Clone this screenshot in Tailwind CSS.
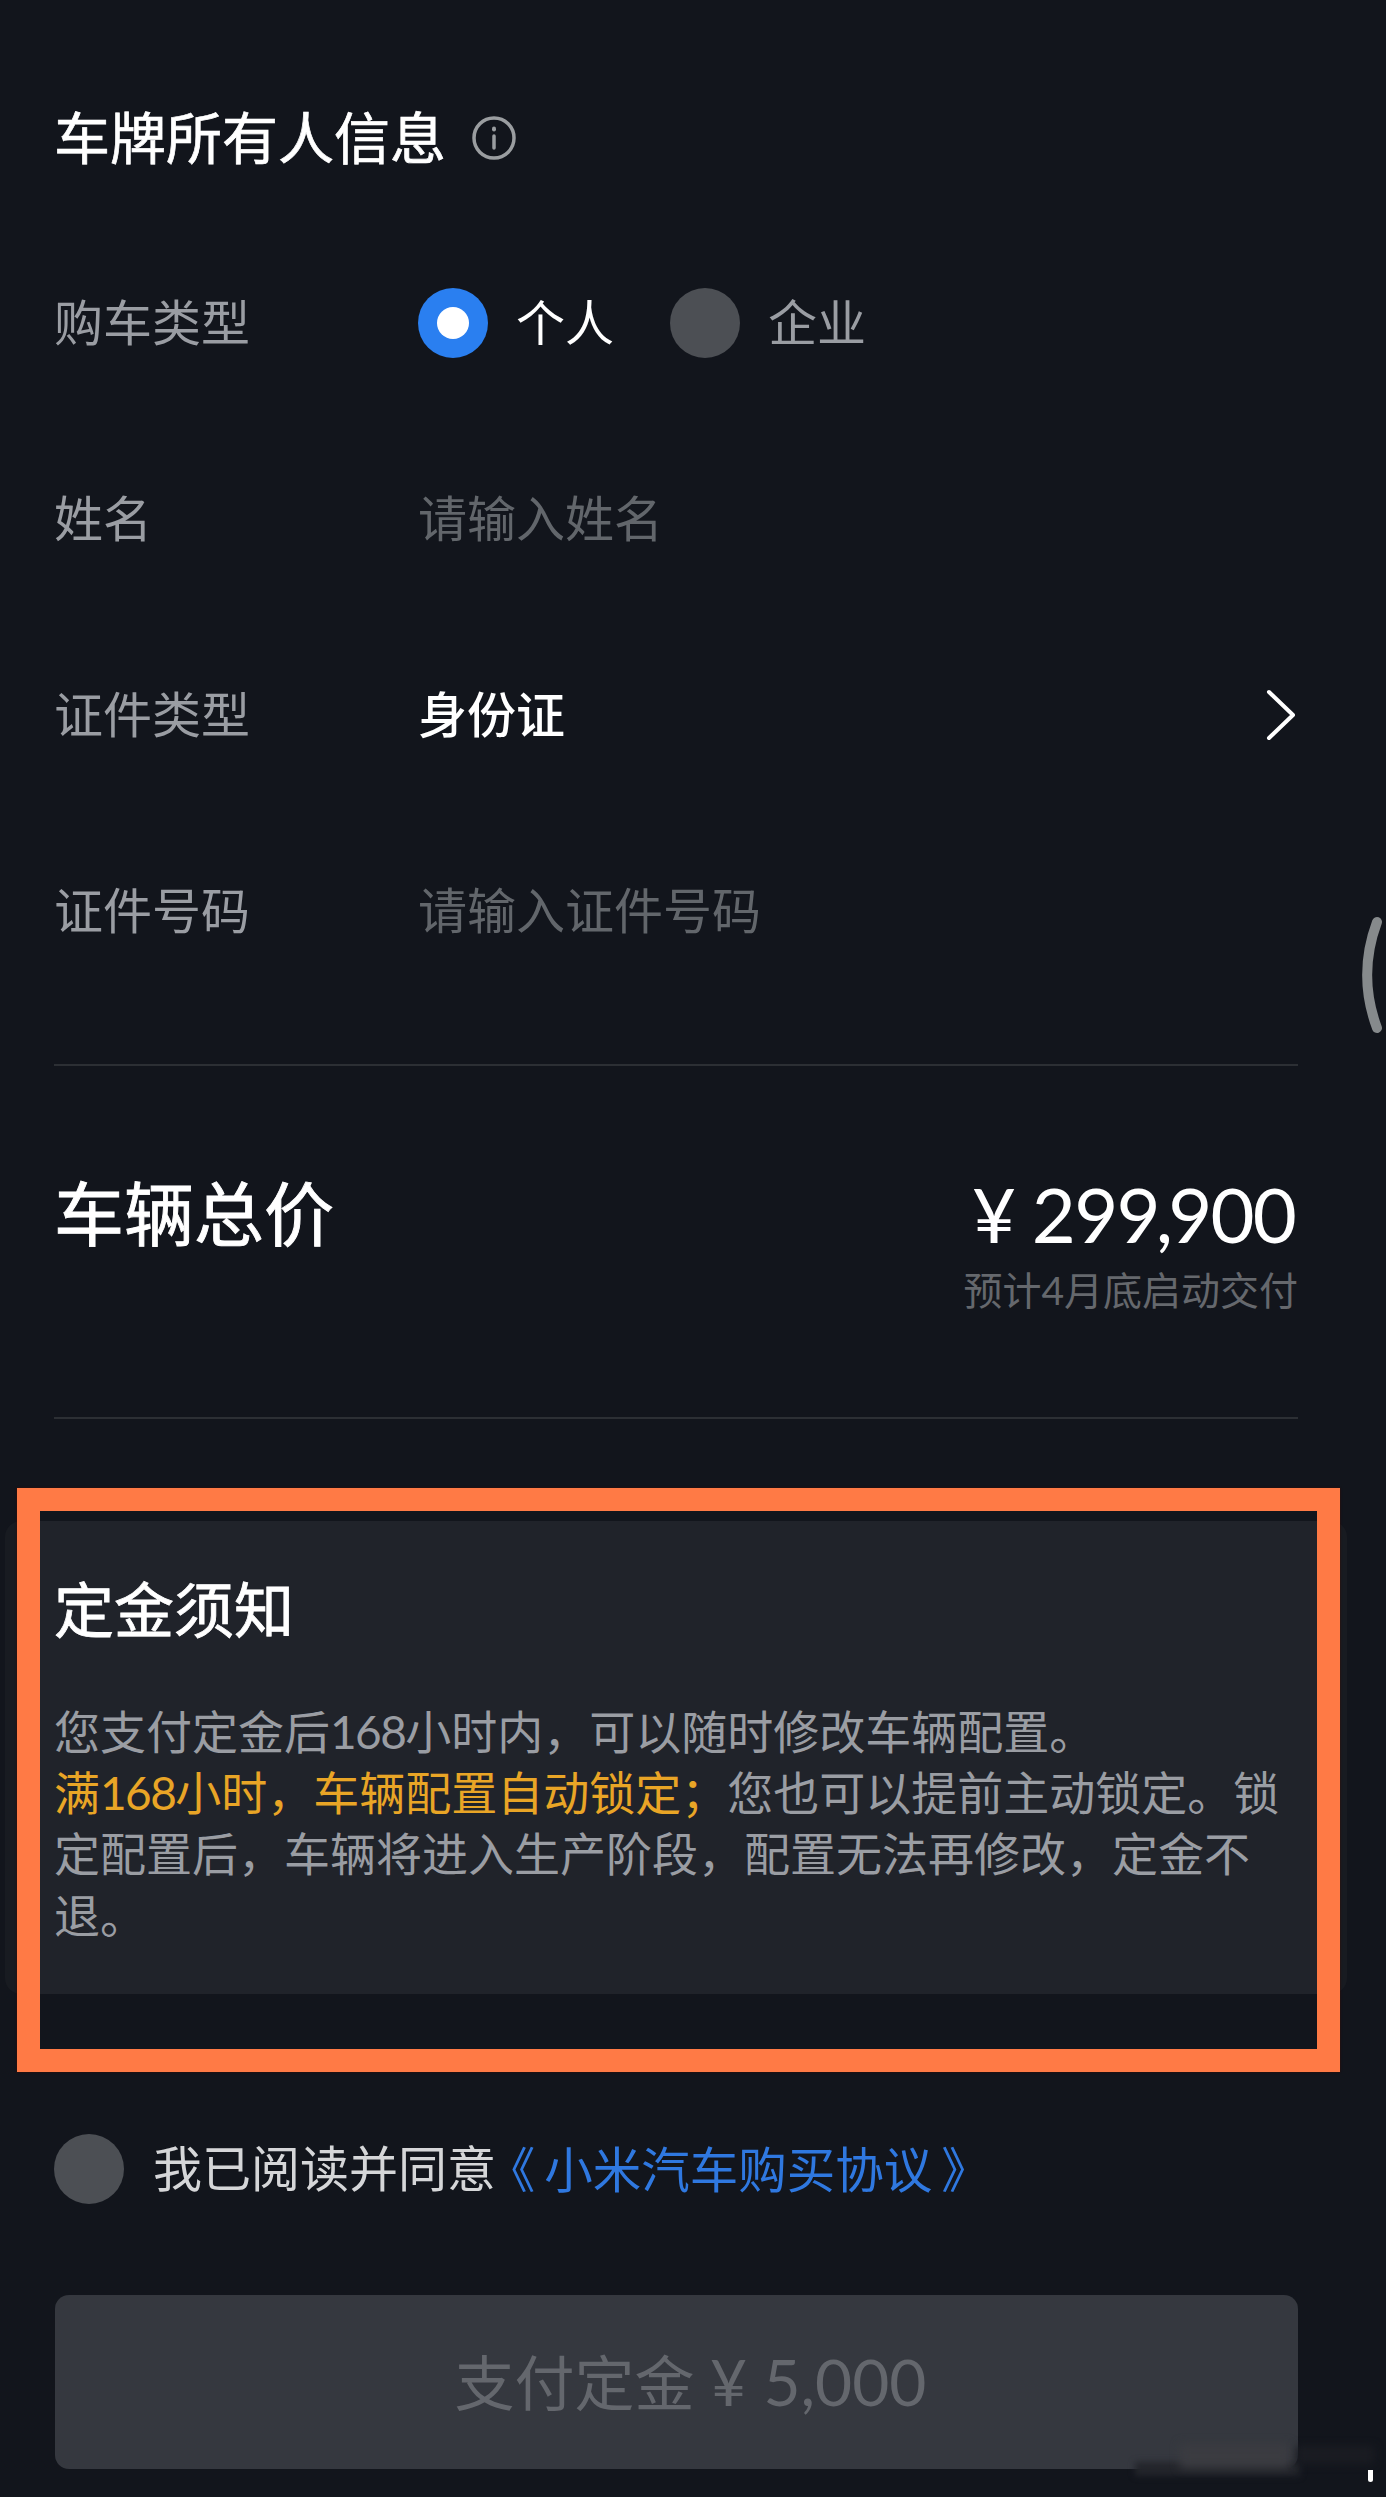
<!DOCTYPE html>
<html lang="zh-CN">
<head>
  <meta charset="UTF-8" />
  <title>车牌所有人信息</title>
  <script src="https://cdn.jsdelivr.net/npm/@tailwindcss/browser@4"></script>
</head>
<body class="bg-[#12151c]">
<div class="relative w-[1386px] h-[2497px] overflow-hidden bg-[#12151c] font-['Lato','Noto_Sans_CJK_SC',sans-serif] text-[49px] text-[#9a9da3]">

  <!-- Owner info -->
  <section class="pl-[54px] w-[1298px]">
    <div class="h-[225px] pt-[98px]">
      <div class="flex items-center h-[80px]">
        <h2 class="text-[56px] font-normal text-white [-webkit-text-stroke:0.7px_white]">车牌所有人信息</h2>
        <svg class="ml-[26px] w-[44px] h-[44px]" viewBox="0 0 44 44" fill="none" stroke="#9a9da0" stroke-width="3.5" stroke-linecap="round">
          <circle cx="22" cy="22" r="20" />
          <path d="M22 20v12" />
          <path d="M22 12.5v1" stroke-width="4" />
        </svg>
      </div>
    </div>

    <div class="flex items-center h-[196px]">
      <span class="w-[364px]">购车类型</span>
      <span class="flex items-center justify-center w-[70px] h-[70px] rounded-full bg-[#2a7ff0]"><span class="w-[32px] h-[32px] rounded-full bg-white"></span></span>
      <span class="ml-[28px] text-white">个人</span>
      <span class="ml-[56px] w-[70px] h-[70px] rounded-full bg-[#4c4f54]"></span>
      <span class="ml-[28px]">企业</span>
    </div>
    <div class="flex items-center h-[196px]">
      <span class="w-[364px]">姓名</span>
      <span class="text-[#62666b]">请输入姓名</span>
    </div>
    <div class="flex items-center h-[196px]">
      <span class="w-[364px]">证件类型</span>
      <span class="font-medium text-white">身份证</span>
      <svg class="ml-auto mr-[2px] w-[30px] h-[52px]" viewBox="0 0 30 52" fill="none" stroke="white" stroke-width="4" stroke-linecap="round" stroke-linejoin="round">
        <path d="M3 3l24 23L3 49" />
      </svg>
    </div>
    <div class="flex items-center h-[196px]">
      <span class="w-[364px]">证件号码</span>
      <span class="text-[#62666b]">请输入证件号码</span>
    </div>
  </section>

  <div class="mt-[55px] ml-[54px] w-[1244px] h-[2px] bg-[#2c2f34]"></div>

  <!-- Total price -->
  <section class="flex justify-between h-[351px] pl-[54px] w-[1295px] pt-[103px]">
    <h2 class="h-[90px] leading-[90px] text-[70px] font-normal text-white [-webkit-text-stroke:0.9px_white]">车辆总价</h2>
    <div class="flex flex-col items-end">
      <div class="h-[90px] leading-[90px] text-[76px] text-white tracking-[-1.8px]">¥ 299<span class="-mx-[3px]">,</span>900</div>
      <div class="mt-[7px] -mr-[3px] h-[48px] leading-[48px] text-[39px] text-[#65686d]">预计4月底启动交付</div>
    </div>
  </section>

  <div class="ml-[54px] w-[1244px] h-[2px] bg-[#2c2f34]"></div>

  <!-- Deposit notice -->
  <section class="mt-[102px] ml-[5px] w-[1342px] rounded-[16px] bg-[#181b21]">
    <div class="ml-[35px] w-[1277px] h-[473px] bg-[#20232a] pl-[14px] pt-[55px]">
      <h3 class="h-[68px] leading-[68px] text-[60px] font-normal text-white [-webkit-text-stroke:0.8px_white]">定金须知</h3>
      <p class="mt-[57px] text-[46px] leading-[61.2px] whitespace-nowrap">您支付定金后<span class="tracking-[-1.6px]">168</span>小时内，可以随时修改车辆配置。<br><span class="text-[#e9a526]">满<span class="tracking-[-1.6px]">168</span>小时，车辆配置自动锁定；</span>您也可以提前主动锁定。锁<br>定配置后，车辆将进入生产阶段，配置无法再修改，定金不<br>退。</p>
    </div>
  </section>

  <!-- Agreement -->
  <div class="flex items-center mt-[140px] ml-[54px] h-[70px]">
    <span class="w-[70px] h-[70px] rounded-full bg-[#4c4f54]"></span>
    <span class="ml-[29px] text-[#d5d6d8]">我已阅读并同意</span>
    <span class="text-[48.5px] text-[#2f78e0]"><span class="inline-block ml-[15px] mr-[9px] [font-feature-settings:'halt']">《</span>小米汽车购买协议<span class="inline-block ml-[9px] [font-feature-settings:'halt']">》</span></span>
  </div>

  <!-- Pay button -->
  <button class="block mt-[91px] ml-[55px] w-[1243px] h-[174px] pl-[28px] rounded-[14px] bg-[#35383f] text-[60px] text-[#64676d]">支付定金 <span class="text-[64px]">¥ 5,000</span></button>

  <!-- Red annotation frame -->
  <div class="absolute left-[17px] top-[1488px] w-[1323px] h-[584px] border-[23px] border-[#ff7a45] shadow-[0_0_2px_#3a0c00]"></div>

  <!-- Edge handle -->
  <svg class="absolute left-[1360px] top-[915px] w-[24px] h-[120px]" viewBox="0 0 24 120" fill="none" stroke="#868a8c" stroke-width="10" stroke-linecap="round">
    <path d="M17 7C4 42 4 78 17 113" />
  </svg>

  <!-- Blurred-out watermark -->
  <div class="absolute left-[1135px] top-[2462px] w-[165px] h-[14px] bg-[#23252b] blur-[3px]"></div>
  <div class="absolute left-[1180px] top-[2444px] w-[110px] h-[24px] bg-[#3b3c41] blur-[5px]"></div>
  <div class="absolute left-[1296px] top-[2446px] w-[78px] h-[18px] bg-[#1a1c22] blur-[4px]"></div>
  <div class="absolute left-[1368px] top-[2470px] w-[5px] h-[12px] rounded-b-[3px] bg-white"></div>
</div>
</body>
</html>
